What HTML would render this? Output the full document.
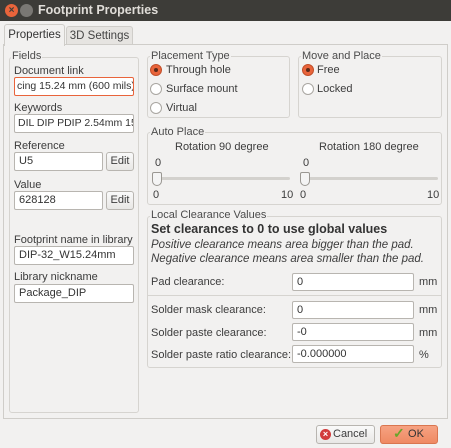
<!DOCTYPE html><html><head><style>
*{margin:0;padding:0;box-sizing:border-box}
body{width:451px;height:448px;background:#f2f1f0;font-family:"Liberation Sans",sans-serif;font-size:11px;color:#3c3c3c;position:relative;overflow:hidden}
.a{position:absolute;white-space:nowrap}
.g{position:absolute;border:1px solid #d6d4d0;border-radius:3px}
.gl{position:absolute;background:#f2f1f0;padding:0 1px;color:#4c4c4c;white-space:nowrap;line-height:12px}
.in{position:absolute;background:#fff;border:1px solid #b8b5b0;border-radius:2px;padding:0 4px;line-height:17px;white-space:nowrap;overflow:hidden;color:#333}
.btn{position:absolute;border:1px solid #b8b5b0;border-radius:3px;background:linear-gradient(#fafafa,#e8e7e5);text-align:center;line-height:17px}
.r{position:absolute;width:12px;height:12px;border-radius:50%;border:1px solid #a9a6a1;background:#fff}
.r.on{background:#e9643b;border-color:#c14f2a}
.r.on:after{content:"";position:absolute;left:3px;top:3px;width:4px;height:4px;border-radius:50%;background:#5a2a1a}
.sl{position:absolute;height:3px;background:#d3d1cd;border-radius:2px}
.th{position:absolute;width:10px;height:14px;background:#f4f4f4;border:1px solid #9a9792;border-radius:2px 2px 5px 5px}
</style></head><body>
<div class="a" style="left:0;top:0;width:451px;height:21px;background:#3d3c38"></div>
<div class="a" style="left:5px;top:4px;width:13px;height:13px;border-radius:50%;background:#e9643b;color:#3d3c38;font-size:10px;line-height:13px;text-align:center;font-weight:bold">×</div>
<div class="a" style="left:20px;top:4px;width:13px;height:13px;border-radius:50%;background:#7a7874"></div>
<div class="a" style="left:38px;top:3px;color:#e0ddd8;font-weight:bold;font-size:12.5px">Footprint Properties</div>
<div class="a" style="left:3px;top:44px;width:445px;height:375px;border:1px solid #cfcdc9;background:#f2f1f0"></div>
<div class="a" style="left:4px;top:24px;width:61px;height:22px;border:1px solid #cfcdc9;border-bottom:none;background:#f2f1f0;border-radius:3px 3px 0 0;text-align:center;line-height:20px;font-size:11.5px;color:#333">Properties</div>
<div class="a" style="left:66px;top:26px;width:67px;height:18px;border:1px solid #cfcdc9;border-bottom:none;background:#e6e4e1;border-radius:3px 3px 0 0;text-align:center;line-height:18px;font-size:11.5px;color:#444">3D Settings</div>

<div class="g" style="left:9px;top:57px;width:130px;height:356px"></div>
<div class="gl" style="left:11px;top:50px">Fields</div>
<div class="a" style="left:14px;top:65px">Document link</div>
<div class="in" style="left:14px;top:77px;width:120px;height:19px;border-color:#e9643b;padding:0 2px;font-size:10.5px">cing 15.24 mm (600 mils)|</div>
<div class="a" style="left:14px;top:102px">Keywords</div>
<div class="in" style="left:14px;top:114px;width:120px;height:19px;padding:0 3px;font-size:10.5px">DIL DIP PDIP 2.54mm 15.</div>
<div class="a" style="left:14px;top:140px">Reference</div>
<div class="in" style="left:14px;top:152px;width:89px;height:19px">U5</div>
<div class="btn" style="left:106px;top:152px;width:28px;height:19px">Edit</div>
<div class="a" style="left:14px;top:179px">Value</div>
<div class="in" style="left:14px;top:191px;width:89px;height:19px">628128</div>
<div class="btn" style="left:106px;top:191px;width:28px;height:19px">Edit</div>
<div class="a" style="left:14px;top:234px">Footprint name in library</div>
<div class="in" style="left:14px;top:246px;width:120px;height:19px">DIP-32_W15.24mm</div>
<div class="a" style="left:14px;top:271px">Library nickname</div>
<div class="in" style="left:14px;top:284px;width:120px;height:19px">Package_DIP</div>

<div class="g" style="left:147px;top:56px;width:143px;height:62px"></div>
<div class="gl" style="left:150px;top:50px">Placement Type</div>
<div class="r on" style="left:150px;top:64px"></div><div class="a" style="left:166px;top:64px">Through hole</div>
<div class="r" style="left:150px;top:83px"></div><div class="a" style="left:166px;top:83px">Surface mount</div>
<div class="r" style="left:150px;top:102px"></div><div class="a" style="left:166px;top:102px">Virtual</div>
<div class="g" style="left:298px;top:56px;width:144px;height:62px"></div>
<div class="gl" style="left:301px;top:50px">Move and Place</div>
<div class="r on" style="left:302px;top:64px"></div><div class="a" style="left:317px;top:64px">Free</div>
<div class="r" style="left:302px;top:83px"></div><div class="a" style="left:317px;top:83px">Locked</div>

<div class="g" style="left:147px;top:132px;width:295px;height:73px"></div>
<div class="gl" style="left:150px;top:126px">Auto Place</div>
<div class="a" style="left:175px;top:141px">Rotation 90 degree</div>
<div class="a" style="left:319px;top:141px">Rotation 180 degree</div>
<div class="a" style="left:155px;top:157px">0</div><div class="a" style="left:303px;top:157px">0</div>
<div class="sl" style="left:156px;top:177px;width:134px"></div>
<div class="sl" style="left:304px;top:177px;width:134px"></div>
<div class="th" style="left:152px;top:172px"></div><div class="th" style="left:300px;top:172px"></div>
<div class="a" style="left:153px;top:189px">0</div><div class="a" style="left:281px;top:189px">10</div>
<div class="a" style="left:300px;top:189px">0</div><div class="a" style="left:427px;top:189px">10</div>

<div class="g" style="left:147px;top:216px;width:295px;height:152px"></div>
<div class="gl" style="left:150px;top:209px">Local Clearance Values</div>
<div class="a" style="left:151px;top:222px;font-weight:bold;font-size:12.5px;color:#333">Set clearances to 0 to use global values</div>
<div class="a" style="left:151px;top:239px;font-style:italic;font-size:11.5px">Positive clearance means area bigger than the pad.</div>
<div class="a" style="left:151px;top:253px;font-style:italic;font-size:11.5px">Negative clearance means area smaller than the pad.</div>
<div class="a" style="left:151px;top:276px">Pad clearance:</div>
<div class="in" style="left:292px;top:273px;width:122px;height:18px">0</div><div class="a" style="left:419px;top:276px">mm</div>
<div class="a" style="left:148px;top:295px;width:293px;height:1px;background:#d6d4d0"></div>
<div class="a" style="left:151px;top:304px">Solder mask clearance:</div>
<div class="in" style="left:292px;top:301px;width:122px;height:18px">0</div><div class="a" style="left:419px;top:304px">mm</div>
<div class="a" style="left:151px;top:327px">Solder paste clearance:</div>
<div class="in" style="left:292px;top:323px;width:122px;height:18px">-0</div><div class="a" style="left:419px;top:327px">mm</div>
<div class="a" style="left:151px;top:349px">Solder paste ratio clearance:</div>
<div class="in" style="left:292px;top:345px;width:122px;height:18px">-0.000000</div><div class="a" style="left:419px;top:349px">%</div>

<div class="btn" style="left:316px;top:425px;width:59px;height:19px;text-align:left;padding-left:16px">Cancel</div>
<div class="a" style="left:320px;top:429px;width:11px;height:11px;border-radius:50%;background:#d23b3b;color:#fff;font-size:9px;line-height:11px;text-align:center;font-weight:bold">×</div>
<div class="btn" style="left:380px;top:425px;width:58px;height:19px;background:linear-gradient(#f6a282,#ef8a63);border-color:#d97650;padding-left:14px;color:#333">OK</div>
<div class="a" style="left:393px;top:425px;color:#6aa52a;font-size:14px;font-weight:bold">✓</div>
</body></html>
